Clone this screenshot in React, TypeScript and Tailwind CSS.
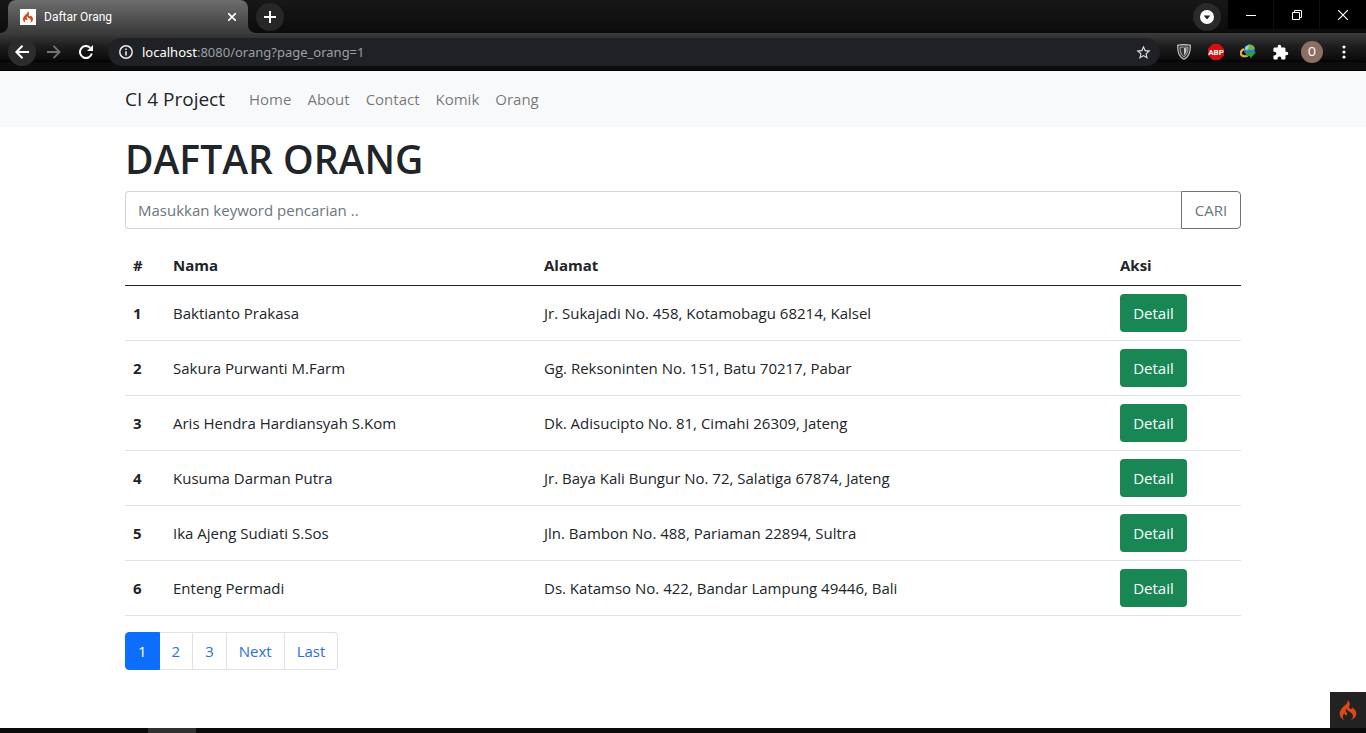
import { SiCodeigniter } from "react-icons/si";
import { MdExtension, MdStarBorder } from "react-icons/md";

const people = [
  { id: 1, name: "Baktianto Prakasa", address: "Jr. Sukajadi No. 458, Kotamobagu 68214, Kalsel" },
  { id: 2, name: "Sakura Purwanti M.Farm", address: "Gg. Reksoninten No. 151, Batu 70217, Pabar" },
  { id: 3, name: "Aris Hendra Hardiansyah S.Kom", address: "Dk. Adisucipto No. 81, Cimahi 26309, Jateng" },
  { id: 4, name: "Kusuma Darman Putra", address: "Jr. Baya Kali Bungur No. 72, Salatiga 67874, Jateng" },
  { id: 5, name: "Ika Ajeng Sudiati S.Sos", address: "Jln. Bambon No. 488, Pariaman 22894, Sultra" },
  { id: 6, name: "Enteng Permadi", address: "Ds. Katamso No. 422, Bandar Lampung 49446, Bali" },
];

const navLinks = ["Home", "About", "Contact", "Komik", "Orang"];
const otherPages = ["2", "3", "Next", "Last"];

function TabStrip() {
  return (
    <div className="flex h-[33px] items-start bg-linear-to-b from-[#171717] to-[#0c0c0c]">
      <div className="relative ml-2 flex h-[33px] w-60 items-center rounded-t-lg bg-linear-to-b from-[#6e6e6e] to-[#3b3b3b] pr-2 pl-3 text-white">
        <svg className="absolute bottom-0 -left-2 size-2" viewBox="0 0 8 8" aria-hidden="true">
          <path d="M8 0v8H0a8 8 0 0 0 8-8z" fill="#3e3e3e" />
        </svg>
        <svg className="absolute -right-2 bottom-0 size-2" viewBox="0 0 8 8" aria-hidden="true">
          <path d="M0 0v8h8a8 8 0 0 1-8-8z" fill="#3e3e3e" />
        </svg>
        <span className="flex size-4 items-center justify-center bg-white">
          <SiCodeigniter className="size-3 text-[#d04a1c]" />
        </span>
        <span className="ml-2 flex-1 font-[Roboto,sans-serif] text-xs">Daftar Orang</span>
        <button type="button" aria-label="Close tab" className="flex size-4 items-center justify-center">
          <svg className="size-2" viewBox="0 0 8 8" stroke="currentColor" strokeWidth="1.6" aria-hidden="true">
            <path d="M0 0l8 8M8 0L0 8" />
          </svg>
        </button>
      </div>
      <button type="button" aria-label="New tab" className="mt-[3px] ml-2 flex size-7 items-center justify-center rounded-full bg-[#272727] text-white">
        <svg className="size-3" viewBox="0 0 12 12" stroke="currentColor" strokeWidth="2" aria-hidden="true">
          <path d="M6 0v12M0 6h12" />
        </svg>
      </button>
      <div className="flex-1" />
      <button type="button" aria-label="Search tabs" className="mt-[3px] mr-[7px] flex size-7 items-center justify-center rounded-full bg-[#2a2a2a]">
        <svg className="size-[14px]" viewBox="0 0 14 14" aria-hidden="true">
          <circle cx="7" cy="7" r="7" fill="#fff" />
          <path d="M3.7 5.4h6.6L7 9.4z" fill="#222" />
        </svg>
      </button>
      <div className="flex h-[29px] text-white">
        <button type="button" aria-label="Minimize" className="flex w-[46px] items-center justify-center border-r border-[#111] bg-black">
          <svg className="size-[10px]" viewBox="0 0 10 10" stroke="currentColor" aria-hidden="true">
            <path d="M0 5.5h10" />
          </svg>
        </button>
        <button type="button" aria-label="Restore" className="flex w-[46px] items-center justify-center border-r border-[#111] bg-black">
          <svg className="size-[10px]" viewBox="0 0 10 10" fill="none" stroke="currentColor" aria-hidden="true">
            <path d="M.5 2.5h7v7h-7zM2.500 2.500v-2h7v7h-2" />
          </svg>
        </button>
        <button type="button" aria-label="Close window" className="flex w-[46px] items-center justify-center bg-black">
          <svg className="size-[10px]" viewBox="0 0 10 10" stroke="currentColor" strokeWidth="1.2" aria-hidden="true">
            <path d="M0 0l10 10M10 0L0 10" />
          </svg>
        </button>
      </div>
    </div>
  );
}

function Toolbar() {
  return (
    <div className="flex h-[38px] items-start gap-1 border-b border-black bg-[linear-gradient(to_bottom,#3c3c3c_0,#1c1c1c_14px,#0b0b0b_27px,#020202_28px,#0e0e0e_30px,#0e0e0e_100%)] pt-[5px] pr-[6px] pl-2 text-white">
      <button type="button" aria-label="Back" className="flex size-7 items-center justify-center rounded-full bg-[#2c2c2c]">
        <svg className="size-[14px]" viewBox="0 0 14 14" fill="none" stroke="currentColor" strokeWidth="2" aria-hidden="true">
          <path d="M14 7H1.500M7.500.8L1.400 7l6.100 6.200" />
        </svg>
      </button>
      <button type="button" aria-label="Forward" className="flex size-7 items-center justify-center text-[#757575]">
        <svg className="size-[14px]" viewBox="0 0 14 14" fill="none" stroke="currentColor" strokeWidth="1.800" aria-hidden="true">
          <path d="M0 7h12.500M6.500.8L12.600 7l-6.100 6.200" />
        </svg>
      </button>
      <button type="button" aria-label="Reload" className="flex size-7 items-center justify-center">
        <svg className="size-[14px]" viewBox="0 0 14 14" fill="none" stroke="currentColor" strokeWidth="2" aria-hidden="true">
          <path d="M12.800 8.600A6 6 0 1 1 11.300 2.900" />
          <path d="M14 0v6H8z" fill="currentColor" stroke="none" />
        </svg>
      </button>
      <div className="ml-1 flex h-7 flex-1 items-center rounded-full bg-[#202124] pr-2 pl-[11px]">
        <svg className="size-[14px]" viewBox="0 0 14 14" fill="none" stroke="#e8eaed" strokeWidth="1.500" aria-hidden="true">
          <circle cx="7" cy="7" r="6.200" />
          <path d="M7 6.200v4.300M7 3.400v1.500" strokeWidth="1.600" />
        </svg>
        <label htmlFor="address" className="ml-[9px] text-[13px] text-white">
          localhost
        </label>
        <input
          id="address"
          type="text"
          defaultValue=":8080/orang?page_orang=1"
          className="min-w-0 flex-1 bg-transparent text-[13px] text-[#9aa0a6] outline-none"
        />
        <button type="button" aria-label="Bookmark this tab">
          <MdStarBorder className="size-[17px] text-[#dadce0]" />
        </button>
      </div>
      <div className="ml-1 flex h-7 items-center">
        <button type="button" aria-label="Privacy shield" className="flex w-8 justify-center">
          <svg className="h-4 w-[14px]" viewBox="0 0 14 16" fill="none" aria-hidden="true">
            <path d="M.7 1.300Q7-.2 13.300 1.300C13.600 8 11.500 13 7 15.300 2.500 13 .4 8 .7 1.300z" fill="#333" stroke="#bdbdbd" strokeWidth="1.200" />
            <path d="M3 3.400Q7 2.500 11 3.400C11 8 9.700 11 7 12.800 4.300 11 3 8 3 3.400z" stroke="#a8a8a8" strokeWidth="1" />
            <path d="M7 4v7.500c1.800-1.600 2.600-4 2.700-7.200Q8.500 4 7 4z" fill="#c8c8c8" />
          </svg>
        </button>
        <button type="button" aria-label="Ad blocker" className="flex w-8 justify-center">
          <svg className="size-4" viewBox="0 0 16 16" aria-hidden="true">
            <path d="M4.700 0h6.600L16 4.700v6.600L11.300 16H4.700L0 11.300V4.700z" fill="#d80f0f" />
            <text x="8" y="11" textAnchor="middle" fontFamily="Roboto, sans-serif" fontSize="8" fontWeight="700" fill="#fff">ABP</text>
          </svg>
        </button>
        <button type="button" aria-label="Download manager" className="flex w-8 justify-center">
          <svg className="size-4" viewBox="0 0 16 16" aria-hidden="true">
            <circle cx="9.500" cy="6" r="5.500" fill="#2c78d0" />
            <path d="M8 .8c3-1 6 1 6.800 3.400l-3 2.300-2.500-1L7 7 5 5.500z" fill="#75b843" />
            <path d="M5.500 2.400L9 1.500 8 5 5 6z" fill="#9bd4f3" />
            <path d="M4 5C-1 7.500-.5 14 8 11.800" fill="none" stroke="#e7b72f" strokeWidth="2" />
            <path d="M7 8.500l9-.5-5.500 6.500-.5-2.500-4 .5z" fill="#2fa433" />
          </svg>
        </button>
        <button type="button" aria-label="Extensions" className="flex w-8 justify-center">
          <MdExtension className="size-[17px]" />
        </button>
        <button type="button" aria-label="Profile" className="flex w-8 justify-center">
          <span className="flex size-[22px] items-center justify-center rounded-full bg-[#8d6e63] font-[Roboto,sans-serif] text-xs">O</span>
        </button>
        <button type="button" aria-label="Browser menu" className="flex w-8 justify-center">
          <svg className="h-[14px] w-1" viewBox="0 0 4 14" fill="currentColor" aria-hidden="true">
            <circle cx="2" cy="2" r="1.600" />
            <circle cx="2" cy="7" r="1.600" />
            <circle cx="2" cy="12" r="1.600" />
          </svg>
        </button>
      </div>
    </div>
  );
}

export default function App() {
  return (
    <div className="flex min-h-screen flex-col bg-white font-['Open_Sans','Noto_Sans',sans-serif] text-[15px] leading-6 text-[#212529]">
      <header className="font-['Noto_Sans',sans-serif]">
        <TabStrip />
        <Toolbar />
      </header>

      <nav className="bg-[#f8f9fa]">
        <div className="mx-auto flex h-14 max-w-[1140px] items-center px-3">
          <a href="#home" className="mr-4 text-[19px]">CI 4 Project</a>
          {navLinks.map((link) => (
            <a key={link} href={`#${link.toLowerCase()}`} className="px-2 text-black/55">
              {link}
            </a>
          ))}
        </div>
      </nav>

      <main className="mx-auto w-full max-w-[1140px] flex-1 px-3 pb-4">
        <h1 className="mt-2 mb-2 text-[39px] leading-[48px] font-semibold">DAFTAR ORANG</h1>
        <form className="mb-4 flex h-[38px]">
          <input
            type="text"
            aria-label="Keyword"
            placeholder="Masukkan keyword pencarian .."
            className="min-w-0 flex-1 rounded-l border border-r-0 border-[#ced4da] px-3 outline-none placeholder:text-[#6c757d]"
          />
          <button type="button" className="w-[60px] rounded-r border border-[#6c757d] text-[#6c757d]">CARI</button>
        </form>

        <table className="w-full table-fixed border-collapse text-left">
          <thead>
            <tr className="h-10 border-b border-[#212529]">
              <th className="w-10 px-2 font-bold">#</th>
              <th className="w-[371px] px-2 font-bold">Nama</th>
              <th className="px-2 font-bold">Alamat</th>
              <th className="w-[129px] px-2 font-bold">Aksi</th>
            </tr>
          </thead>
          <tbody>
            {people.map((person) => (
              <tr key={person.id} className="h-[55px] border-b border-[#dee2e6]">
                <th scope="row" className="px-2 font-bold">{person.id}</th>
                <td className="px-2">{person.name}</td>
                <td className="px-2">{person.address}</td>
                <td className="px-2">
                  <a href={`#detail-${person.id}`} className="flex h-[38px] w-[67px] items-center justify-center rounded bg-[#198754] text-white">
                    Detail
                  </a>
                </td>
              </tr>
            ))}
          </tbody>
        </table>

        <nav aria-label="Pagination" className="mt-4 flex h-[38px]">
          <a href="#page-1" aria-current="page" className="flex items-center rounded-l border border-[#0d6efd] bg-[#0d6efd] px-3 text-white">
            1
          </a>
          {otherPages.map((page) => (
            <a key={page} href={`#page-${page}`} className="flex items-center border border-l-0 border-[#dee2e6] px-3 text-[#2b6fe0] last:rounded-r">
              {page}
            </a>
          ))}
        </nav>
      </main>

      <footer className="relative h-[5px] bg-[#0a0a0a]">
        <div className="ml-[148px] h-full w-12 bg-[#303030]" />
        <button type="button" aria-label="Debug toolbar" className="absolute right-0 bottom-full flex size-9 items-center justify-center bg-[#222]">
          <SiCodeigniter className="size-5 text-[#dd4814]" />
        </button>
      </footer>
    </div>
  );
}
